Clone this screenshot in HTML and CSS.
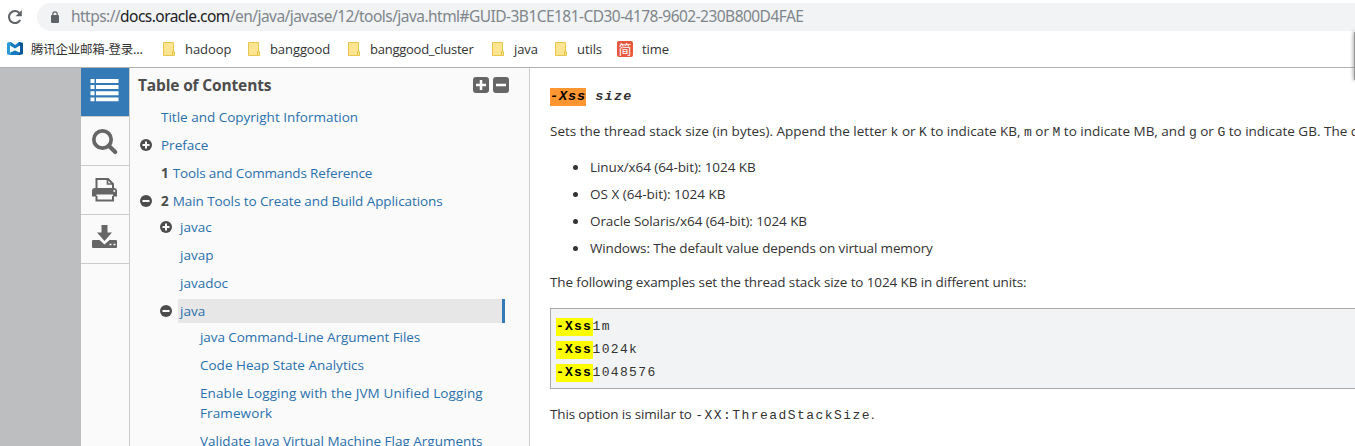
FILE: index.html
```html
<!DOCTYPE html>
<html lang="en">
<head>
<meta charset="utf-8">
<title>java - Tools Reference</title>
<link rel="stylesheet" href="styles.css">
</head>
<body>
<header class="browser">
  <div class="address-row">
    <svg class="reload" width="16" height="16" viewBox="0 0 16 16"><path d="M13.2 11A6 6 0 1 1 12.5 4.1" fill="none" stroke="#5f6368" stroke-width="2"/><path d="M14.8 1v6.2H8.6z" fill="#5f6368"/></svg>
    <div class="omnibox">
      <svg width="8" height="12" viewBox="0 0 8 12"><path d="M1.8 5V3a2.2 2.2 0 0 1 4.4 0v2" fill="none" stroke="#5f6368" stroke-width="1.2"/><rect y="4" width="8" height="8" rx="1" fill="#5f6368"/></svg>
      <span class="url">https://<b class="host">docs.oracle.com</b>/en/java/javase/12/tools/java.html#GUID-3B1CE181-CD30-4178-9602-230B800D4FAE</span>
    </div>
  </div>
  <nav class="bookmarks">
    <a class="bm bm-mail"><svg width="16" height="14" viewBox="0 0 16 14"><path d="M0 1l4-1 4 3 4-3 4 1v11l-4 1H4l-4-1z" fill="#1679bd"/><path d="M0 1l4-1v13l-4-1z" fill="#2b9ad8"/><path d="M12 0l4 1v11l-4 1z" fill="#0b5797"/><path d="M3 3.5l5 3 5-3v7L8 8.500l-5 2z" fill="#fff"/></svg><span>腾讯企业邮箱-登录...</span></a>
    <a class="bm bm-hadoop"><svg class="folder" width="13" height="14" viewBox="0 0 13 14"><path d="M.5.5h10v9h1v4H.5z" fill="#ffe591" stroke="#e8c64d"/><path d="M9.500 13V9.500h1.500" fill="none" stroke="#e8c64d"/></svg><span>hadoop</span></a>
    <a class="bm bm-banggood"><svg class="folder" width="13" height="14" viewBox="0 0 13 14"><path d="M.5.5h10v9h1v4H.5z" fill="#ffe591" stroke="#e8c64d"/><path d="M9.500 13V9.500h1.500" fill="none" stroke="#e8c64d"/></svg><span>banggood</span></a>
    <a class="bm bm-cluster"><svg class="folder" width="13" height="14" viewBox="0 0 13 14"><path d="M.5.5h10v9h1v4H.5z" fill="#ffe591" stroke="#e8c64d"/><path d="M9.500 13V9.500h1.500" fill="none" stroke="#e8c64d"/></svg><span>banggood_cluster</span></a>
    <a class="bm bm-java"><svg class="folder" width="13" height="14" viewBox="0 0 13 14"><path d="M.5.5h10v9h1v4H.5z" fill="#ffe591" stroke="#e8c64d"/><path d="M9.500 13V9.500h1.500" fill="none" stroke="#e8c64d"/></svg><span>java</span></a>
    <a class="bm bm-utils"><svg class="folder" width="13" height="14" viewBox="0 0 13 14"><path d="M.5.5h10v9h1v4H.5z" fill="#ffe591" stroke="#e8c64d"/><path d="M9.500 13V9.500h1.500" fill="none" stroke="#e8c64d"/></svg><span>utils</span></a>
    <a class="bm bm-time"><i class="jian">简</i><span>time</span></a>
  </nav>
</header>
<div class="popup-edge"></div>
<div class="page">
  <nav class="tools">
    <a class="tool active"><svg width="48" height="48" viewBox="0 0 48 48" fill="#fff"><path d="M9.500 11h4v4h-4zm5.500 0h22.500v4H15zM9.500 17h4v4h-4zm5.500 0h22.500v4H15zM9.500 23.200h4v4h-4zm5.500 0h22.500v4H15zM9.500 29.400h4v3.800h-4zm5.500 0h22.500v3.800H15z"/></svg></a>
    <a class="tool"><svg width="48" height="48" viewBox="0 0 48 48"><circle cx="21.500" cy="22.500" r="8.700" fill="none" stroke="#666" stroke-width="3.700"/><path d="M28 29l6.200 6" stroke="#666" stroke-width="4.200" stroke-linecap="round"/></svg></a>
    <a class="tool"><svg width="48" height="48" viewBox="0 0 48 48"><path d="M15.500 23.500V13H27l5 5v5.500M15.500 30v4.500h16.500V30" fill="none" stroke="#666" stroke-width="2"/><path d="M26.500 12.500V18H32" fill="none" stroke="#666" stroke-width="1.700"/><path d="M14 22h19q3 0 3 3v5.500h-4v-2H15.500v2H11V25q0-3 3-3z" fill="#666"/><circle cx="33.300" cy="25" r="1" fill="#fafafa"/></svg></a>
    <a class="tool"><svg width="48" height="48" viewBox="0 0 48 48"><path d="M20.500 10h6v7.500H31L23.500 26 16 17.500h4.500zM12 25h6.500l5 4.500 5-4.500H35q1 0 1 1v6q0 1-1 1H12q-1 0-1-1v-6q0-1 1-1z" fill="#666"/><path d="M28.500 29.500h2M32.500 29.500h2" stroke="#fafafa" stroke-width="1.700"/></svg></a>
  </nav>
  <aside class="toc">
    <div class="toc-head">
      <h2>Table of Contents</h2>
      <svg width="36" height="16" viewBox="0 0 36 16"><rect width="16" height="16" rx="3" fill="#666"/><rect x="20" width="16" height="16" rx="3" fill="#666"/><path d="M3 8h10M8 3v10M23 8h10" stroke="#fff" stroke-width="2.500"/></svg>
    </div>
    <ul class="tree level1">
      <li><a>Title and Copyright Information</a></li>
      <li><svg class="mark" width="12" height="12" viewBox="0 0 12 12"><circle cx="6" cy="6" r="6" fill="#4c4c4c"/><path d="M2.500 6h7M6 2.500v7" stroke="#fff" stroke-width="2"/></svg><a>Preface</a></li>
      <li><b>1</b><a class="tight">Tools and Commands Reference</a></li>
      <li><svg class="mark" width="12" height="12" viewBox="0 0 12 12"><circle cx="6" cy="6" r="6" fill="#4c4c4c"/><path d="M2.500 6h7" stroke="#fff" stroke-width="2"/></svg><b>2</b><a class="snug">Main Tools to Create and Build Applications</a></li>
    </ul>
    <ul class="tree level2">
      <li><svg class="mark" width="12" height="12" viewBox="0 0 12 12"><circle cx="6" cy="6" r="6" fill="#4c4c4c"/><path d="M2.500 6h7M6 2.500v7" stroke="#fff" stroke-width="2"/></svg><a>javac</a></li>
      <li><a>javap</a></li>
      <li><a>javadoc</a></li>
      <li class="selected"><svg class="mark" width="12" height="12" viewBox="0 0 12 12"><circle cx="6" cy="6" r="6" fill="#4c4c4c"/><path d="M2.500 6h7" stroke="#fff" stroke-width="2"/></svg><a>java</a></li>
    </ul>
    <ul class="tree level3">
      <li><a class="snug">java Command-Line Argument Files</a></li>
      <li><a>Code Heap State Analytics</a></li>
      <li><a class="loose">Enable Logging with the JVM Unified Logging<br>Framework</a></li>
      <li><a>Validate Java Virtual Machine Flag Arguments</a></li>
    </ul>
  </aside>
  <main class="doc">
    <h3 class="option"><mark class="hit current">-Xss</mark> <em>size</em></h3>
    <p class="sets">Sets the thread stack size (in bytes). Append the letter <code>k</code> or <code>K</code> to indicate KB, <code>m</code> or <code>M</code> to indicate MB, and <code>g</code> or <code>G</code> to indicate GB. The default value</p>
    <ul class="values">
      <li><span class="snug">Linux/x64 (64-bit): 1024 KB</span></li>
      <li><span>OS X (64-bit): 1024 KB</span></li>
      <li><span class="snug">Oracle Solaris/x64 (64-bit): 1024 KB</span></li>
      <li><span class="tight">Windows: The default value depends on virtual memory</span></li>
    </ul>
    <p class="following">The following examples set the thread stack size to 1024 KB in different units:</p>
    <pre class="example"><mark class="hit">-Xss</mark>1m
<mark class="hit">-Xss</mark>1024k
<mark class="hit">-Xss</mark>1048576</pre>
    <p class="similar"><span class="tight">This option is similar to</span> <code class="long">-XX:ThreadStackSize</code>.</p>
  </main>
</div>
</body>
</html>
```
FILE: styles.css
```css
* { box-sizing: border-box; }
body { position: relative; margin: 0; height: 446px; overflow: hidden; background: #fff; font: 13.5px/20px "Open Sans", "Noto Sans CJK SC", sans-serif; color: #333; white-space: nowrap; }
ul, h2, h3, p, pre { margin: 0; padding: 0; }
ul { list-style: none; }
svg { display: block; flex: none; }
.snug { letter-spacing: -0.08px; }
.tight { letter-spacing: -0.15px; }
.loose { letter-spacing: 0.11px; }

.browser { height: 68px; border-bottom: 1px solid #b0b0b0; padding-top: 3px; overflow: hidden; }
.address-row { display: flex; align-items: center; padding-left: 7px; gap: 14px; height: 28px; }
.omnibox { flex: 1; display: flex; align-items: center; gap: 12px; height: 28px; padding-left: 14px; border-radius: 14px 0 0 14px; background: #f1f3f4; }
.url { font: 15.5px/26px "Noto Sans", sans-serif; height: 28px; color: #80868b; letter-spacing: -0.54px; }
.host { font-weight: 400; color: #202124; }
.bookmarks { display: flex; height: 36px; align-items: center; padding-left: 7px; font-size: 13px; letter-spacing: -0.08px; }
.bm { display: flex; align-items: center; gap: 9px; flex: none; }
.bm-mail { width: 156px; gap: 8px; font-family: "Noto Sans CJK SC", sans-serif; font-size: 12.5px; letter-spacing: -0.25px; }
.bm-hadoop { width: 85px; }
.bm-banggood { width: 100px; }
.bm-cluster { width: 144px; letter-spacing: -0.25px; }
.bm-java { width: 63px; }
.bm-utils { width: 62px; }
.jian { width: 16px; height: 16px; border-radius: 2px; background: #e8573f; color: #fff; font: 13px/15px "Noto Sans CJK SC", sans-serif; text-align: center; }
.popup-edge { position: absolute; right: -2px; top: 32px; width: 3px; height: 48px; background: #999; box-shadow: 0 0 4px #777; }

.page { display: flex; height: 378px; padding-left: 81px; background: #bdbec0; overflow: hidden; }
.tools { width: 49px; flex: none; background: #fafafa; border-right: 1px solid #ccc; }
.tool { display: block; height: 49px; border-bottom: 1px solid #ccc; }
.tool.active { background: #337ab7; background-clip: padding-box; }
.toc { width: 400px; flex: none; background: #fafafa; border-right: 1px solid #ccc; color: #4c4c4c; }
.toc-head { display: flex; justify-content: space-between; padding: 9px 20px 0 8px; height: 35px; }
h2 { font-size: 15.5px; line-height: 17px; letter-spacing: -0.15px; }
.tree { padding: 0 24px 0 30px; }
.tree li { display: flex; min-height: 20px; margin: 4px 0 8px; }
.tree a { color: #2a70ad; }
.tree b { margin-right: 4px; }
.mark { margin: 4px 9px 0 -21px; }
.level1 { padding-left: 31px; }
.level2 { padding-left: 48px; margin-top: -2px; }
.level2 li { padding-left: 2px; }
.level2 .mark { margin-left: -20px; margin-right: 8px; }
.tree .selected { height: 24px; margin: -2px 0 4px; padding-top: 2px; background: #e7e7e7; border-right: 3px solid #337ab7; }
.level3 { padding-left: 70px; }

.doc { flex: 1; min-width: 0; padding-left: 20px; background: #fff; overflow: hidden; }
.option { margin-top: 19px; font: bold 13.5px/20px "Liberation Mono", monospace; letter-spacing: 1.2px; }
.hit { display: inline-block; line-height: 18px; background: #ff0; color: #000; font-weight: bold; }
.current { width: 36px; background: #ff9632; font-style: italic; letter-spacing: 0.9px; }
.sets { margin-top: 14px; }
code, pre { font-family: "Liberation Mono", monospace; font-size: 13px; }
.values { margin-top: 13px; padding-left: 40px; }
.values li { position: relative; height: 27px; line-height: 23px; }
.values li::before { content: ""; position: absolute; left: -17px; top: 9px; width: 5px; height: 5px; border-radius: 50%; background: #333; }
.following { margin-top: 8px; letter-spacing: -0.115px; }
.example { height: 81px; margin: 16px -5px 0 0; padding: 6px 5px; border: 1px solid #a9a9a9; background: #f2f3f5; line-height: 23px; letter-spacing: 1.35px; }
.example .hit { width: 36.5px; letter-spacing: 1.2px; }
.similar { margin-top: 15px; }
.long { letter-spacing: 1.45px; }
```
